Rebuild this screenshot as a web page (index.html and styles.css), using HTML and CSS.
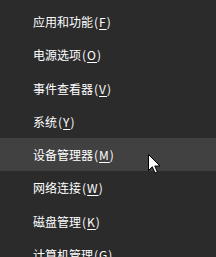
FILE: index.html
```html
<!DOCTYPE html>
<html lang="zh-CN">
  <head>
    <meta charset="utf-8">
    <title>menu</title>
    <link rel="stylesheet" href="styles.css">
  </head>
  <body>
    <ul class="menu">
      <li class="item">应用和功能<span class="key">(<u>F</u>)</span></li>
      <li class="item">电源选项<span class="key">(<u>O</u>)</span></li>
      <li class="item">事件查看器<span class="key">(<u>V</u>)</span></li>
      <li class="item">系统<span class="key">(<u>Y</u>)</span></li>
      <li class="item hover">设备管理器<span class="key">(<u>M</u>)</span>
        <svg class="cursor" width="13" height="20" viewBox="0 0 13 20">
          <path d="M0.5 0.5 L0.5 16.5 L4.3 12.8 L7 19 L9.4 18 L6.8 12 L12 12 Z" fill="#fff" stroke="#000" stroke-width="1"/>
        </svg>
      </li>
      <li class="item">网络连接<span class="key">(<u>W</u>)</span></li>
      <li class="item">磁盘管理<span class="key">(<u>K</u>)</span></li>
      <li class="item">计算机管理<span class="key">(<u>G</u>)</span></li>
    </ul>
  </body>
</html>
```
FILE: styles.css
```css
body{
  margin:0;
  background-color:#2b2b2b;
  overflow:hidden;
}
.menu{
  list-style:none;
  margin:0;
  padding:5px 0 0 0;
  font-family:"Noto Sans CJK SC", "Noto Sans", sans-serif;
  font-size:12px;
  color:#fff;
}
.item{
  position:relative;
  display:flex;
  align-items:center;
  height:33.25px;
  padding-left:33px;
  white-space:nowrap;
}
.hover{
  background-color:#414141;
}
.key{
  letter-spacing:1px;
  margin-left:1px;
}
.key u{
  text-underline-offset:2px;
}
.cursor{
  position:absolute;
  left:148px;
  top:16px;
}
```
